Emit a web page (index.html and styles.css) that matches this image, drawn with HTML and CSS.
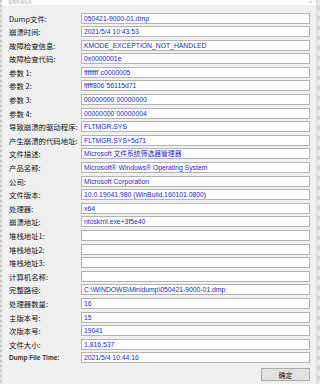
FILE: index.html
```html
<!DOCTYPE html>
<html>
<head>
    <title>故障转储信息</title>
    <link rel="stylesheet" href="styles.css">
</head>
<body>
<div class="edge-left"></div>
<div class="dialog">
    <div class="titlebar">
        <span class="title">故障转储信息</span>
        <span class="close">×</span>
    </div>

    <div class="fields">
        <div class="row"><label>Dump文件:</label><div class="field">050421-9000-01.dmp</div></div>
        <div class="row"><label>崩溃时间:</label><div class="field">2021/5/4 10:43:53</div></div>
        <div class="row"><label>故障检查信息:</label><div class="field">KMODE_EXCEPTION_NOT_HANDLED</div></div>
        <div class="row"><label>故障检查代码:</label><div class="field">0x0000001e</div></div>
        <div class="row"><label>参数 1:</label><div class="field">ffffffff`c0000005</div></div>
        <div class="row"><label>参数 2:</label><div class="field">fffff806`56115d71</div></div>
        <div class="row"><label>参数 3:</label><div class="field">00000000`00000000</div></div>
        <div class="row"><label>参数 4:</label><div class="field">00000000`00000004</div></div>
        <div class="row"><label>导致崩溃的驱动程序:</label><div class="field">FLTMGR.SYS</div></div>
        <div class="row"><label>产生崩溃的代码地址:</label><div class="field">FLTMGR.SYS+5d71</div></div>
        <div class="row"><label>文件描述:</label><div class="field">Microsoft 文件系统筛选器管理器</div></div>
        <div class="row"><label>产品名称:</label><div class="field">Microsoft® Windows® Operating System</div></div>
        <div class="row"><label>公司:</label><div class="field">Microsoft Corporation</div></div>
        <div class="row"><label>文件版本:</label><div class="field">10.0.19041.980 (WinBuild.160101.0800)</div></div>
        <div class="row"><label>处理器:</label><div class="field">x64</div></div>
        <div class="row"><label>崩溃地址:</label><div class="field">ntoskrnl.exe+3f5e40</div></div>
        <div class="row"><label>堆栈地址1:</label><div class="field"></div></div>
        <div class="row"><label>堆栈地址2:</label><div class="field"></div></div>
        <div class="row"><label>堆栈地址3:</label><div class="field"></div></div>
        <div class="row"><label>计算机名称:</label><div class="field"></div></div>
        <div class="row"><label>完整路径:</label><div class="field">C:\WINDOWS\Minidump\050421-9000-01.dmp</div></div>
        <div class="row"><label>处理器数量:</label><div class="field">16</div></div>
        <div class="row"><label>主版本号:</label><div class="field">15</div></div>
        <div class="row"><label>次版本号:</label><div class="field">19041</div></div>
        <div class="row"><label>文件大小:</label><div class="field">1,816,537</div></div>
        <div class="row"><label class="latin">Dump File Time:</label><div class="field">2021/5/4 10:44:16</div></div>
    </div>

    <div class="actions">
        <button class="btn">确定</button>
    </div>
</div>
<div class="edge-right"></div>
</body>
</html>
```

FILE: styles.css
```css
html, body {
    margin: 0;
    padding: 0;
}
body {
    width: 320px;
    height: 384px;
    display: flex;
    overflow: hidden;
    background-color: #f0f0f0;
    font-family: "Liberation Sans", "Noto Sans CJK SC", sans-serif;
}
.edge-left {
    width: 2px;
    background: repeating-linear-gradient(#c8c8c8 0 2px, #e0e0e0 2px 5px);
}
.edge-right {
    width: 3px;
    background: repeating-linear-gradient(#e6e6e6 0 6px, #cfcfcf 6px 7px, #dcd4d4 7px 10px);
}
.dialog {
    flex: 1;
    display: flex;
    flex-direction: column;
    background-color: #f0f0f0;
    border-right: 1px solid #dadada;
}
.titlebar {
    height: 5px;
    background-color: #ffffff;
    display: flex;
    justify-content: space-between;
    align-items: center;
    font-size: 4px;
    line-height: 5px;
    color: #b0b0b0;
}
.title {
    margin-left: 6px;
    font-family: "Noto Sans CJK SC", sans-serif;
}
.close {
    margin-right: 4px;
    font-size: 5px;
}
.fields {
    padding: 7.5px 6px 0 7px;
    display: flex;
    flex-direction: column;
    gap: 2.6px;
}
.row {
    display: flex;
    align-items: center;
    height: 11px;
}
.row label {
    width: 72px;
    font-family: "Noto Sans CJK SC", sans-serif;
    font-size: 7.4px;
    color: #111111;
    white-space: nowrap;
}
.row label.latin {
    font-family: "Liberation Sans", sans-serif;
    font-size: 6.5px;
    font-weight: bold;
    color: #333333;
}
.field {
    flex: 1;
    height: 9px;
    background-color: #ffffff;
    border: 1px solid #b4b4b4;
    padding-left: 2px;
    font-size: 6.8px;
    line-height: 9px;
    color: #1e1ed0;
    white-space: nowrap;
    overflow: hidden;
}
.actions {
    display: flex;
    justify-content: flex-end;
    padding: 4.7px 6px 0 0;
}
.btn {
    width: 49px;
    height: 13px;
    padding: 0;
    background-color: #e1e1e1;
    border: 1px solid #adadad;
    font-family: "Noto Sans CJK SC", sans-serif;
    font-size: 7px;
    color: #111111;
}
```
